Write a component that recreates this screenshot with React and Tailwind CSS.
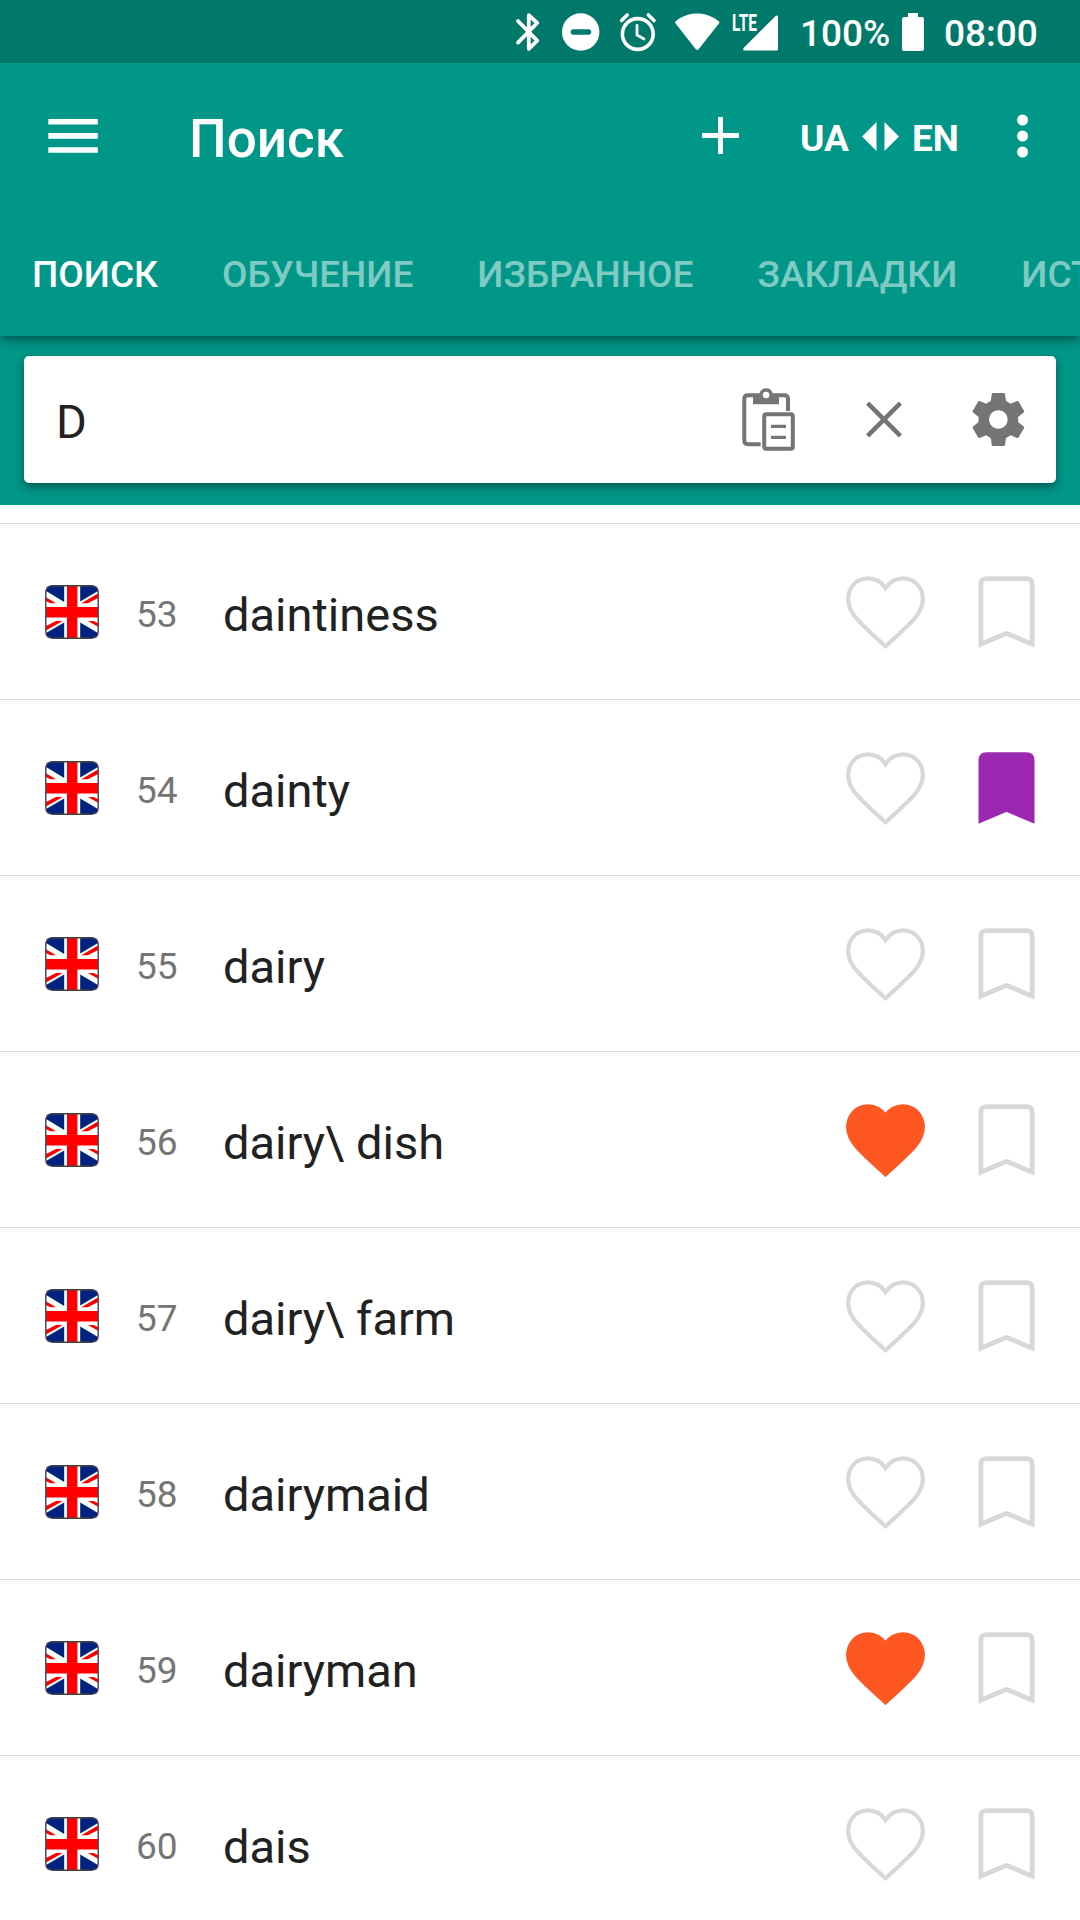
const words = [
  { id: 53, text: "daintiness" },
  { id: 54, text: "dainty", bookmarked: true },
  { id: 55, text: "dairy" },
  { id: 56, text: "dairy\\ dish", liked: true },
  { id: 57, text: "dairy\\ farm" },
  { id: 58, text: "dairymaid" },
  { id: 59, text: "dairyman", liked: true },
  { id: 60, text: "dais" },
];

const tabs = ["ПОИСК", "ОБУЧЕНИЕ", "ИЗБРАННОЕ", "ЗАКЛАДКИ", "ИСТОРИЯ"];

const StatusBar = () => (
  <div className="flex h-[63px] shrink-0 items-center bg-[#00796b] pl-[516px] text-white">
    <svg className="h-[38px] w-[24px]" viewBox="0 0 24 38" fill="none" stroke="currentColor" strokeWidth="3.8" strokeLinecap="round" strokeLinejoin="round">
      <path d="M2 8L21.2 27.6L12.8 35.8V2.2L21.2 10L2 29.6" />
    </svg>
    <svg className="ml-[22px] size-[38px]" viewBox="0 0 38 38">
      <circle cx="18.7" cy="19" r="18.7" fill="currentColor" />
      <rect x="8.7" y="16.3" width="20.5" height="5.4" rx="2.7" fill="#00796b" />
    </svg>
    <svg className="ml-[19px] h-[40px] w-[38px]" viewBox="0 0 38 40" fill="none" stroke="currentColor" strokeWidth="3.6" strokeLinecap="round">
      <circle cx="18.8" cy="22" r="15.4" />
      <path d="M2.6 8.6L8.2 3M29.4 3L35 8.6" />
      <path d="M18 13.5V23L25 27" strokeWidth="2.8" />
    </svg>
    <svg className="ml-[18px] h-[38px] w-[45px]" viewBox="0 0 45 38" fill="currentColor">
      <path d="M0.6 10.6C-.1 9.8 0 8.8.9 8.2C13-2 31-2 43.6 8.2C44.5 8.8 44.6 9.8 43.9 10.6L23.6 36.2C22.8 37.3 21.6 37.3 20.8 36.2Z" />
    </svg>
    <svg className="ml-[12px] h-[38px] w-[47px] overflow-visible" viewBox="0 0 47 38" fill="currentColor">
      <text x="0" y="17.5" fontFamily="Roboto, sans-serif" fontSize="23" fontWeight="700" textLength="25" lengthAdjust="spacingAndGlyphs">LTE</text>
      <path d="M43.4 3.2C44.6 2 46 2.6 46 4.2V36C46 37 45.4 37.6 44.4 37.6H13C11.2 37.6 10.6 36 11.8 34.8Z" />
    </svg>
    <span className="ml-[21px] w-[90px] pt-[3px] text-[37px] font-medium leading-none">100%</span>
    <svg className="ml-[12px] h-[38px] w-[22px]" viewBox="0 0 22 38" fill="currentColor">
      <path d="M6 0H16V4H20Q22 4 22 6V36Q22 38 20 38H2Q0 38 0 36V6Q0 4 2 4H6Z" />
    </svg>
    <span className="ml-[20px] pt-[3px] text-[37px] font-medium leading-none">08:00</span>
  </div>
);

const AppBar = () => (
  <div className="relative z-10 h-[273px] shrink-0 bg-[#009688] text-white shadow-[0_5px_10px_-1px_rgba(0,0,0,0.42)]">
    <div className="flex h-[145px] items-center">
      <svg className="ml-[48px] h-[34px] w-[50px]" viewBox="0 0 50 34" fill="currentColor">
        <path d="M0.3 0H49.8V5.6H0.3ZM0.3 14.1H49.8V19.7H0.3ZM0.3 28.2H49.8V33.8H0.3Z" />
      </svg>
      <h1 className="ml-[91px] w-[513px] pt-[8px] text-[53px] font-medium leading-none">Поиск</h1>
      <svg className="size-[37px]" viewBox="0 0 37 37" fill="currentColor">
        <path d="M16 0H21V16H37V21H21V37H16V21H0V16H16Z" />
      </svg>
      <span className="ml-[61px] flex items-center text-[37px] font-bold leading-none">
        <span className="w-[62px] pt-[6px]">UA</span>
        <svg className="mt-[2px] h-[29px] w-[37px]" viewBox="0 0 37 29" fill="currentColor">
          <path d="M14.5 0V29L0 14.5ZM22.5 0V29L37 14.5Z" />
        </svg>
        <span className="ml-[13px] w-[60px] pt-[6px]">EN</span>
      </span>
      <svg className="ml-[45px] mt-px h-[44px] w-[12px]" viewBox="0 0 12 44" fill="currentColor">
        <circle cx="5.6" cy="6" r="5.5" />
        <circle cx="5.6" cy="22" r="5.5" />
        <circle cx="5.6" cy="38" r="5.5" />
      </svg>
    </div>
    <nav className="flex h-[128px] items-center gap-[64px] overflow-hidden pl-[32px] pt-[4px] text-[37px] font-medium leading-none">
      {tabs.map((tab, i) => (
        <span key={tab} className={i === 0 ? "text-white" : "text-white/50"}>
          {tab}
        </span>
      ))}
    </nav>
  </div>
);

const SearchBox = () => (
  <div className="h-[169px] shrink-0 bg-[#009688] px-[24px] pt-[20px]">
    <div className="flex h-[127px] items-center rounded-[5px] bg-white text-[#757575] shadow-[0_4px_10px_rgba(0,0,0,0.4)]">
      <span className="ml-[32px] w-[686px] pt-[4px] text-[47px] leading-none text-[#212121]">D</span>
      <svg className="h-[63px] w-[53px]" viewBox="0 0 53 63" fill="none" stroke="currentColor" strokeWidth="4">
        <path d="M18.7 56.3H6Q2.3 56.3 2.3 52.6V11Q2.3 7.3 6 7.3H12M36 7.3H42.3Q46 7.3 46 11V23" />
        <path d="M11 5.3H17.6A6.7 6.7 0 0 1 30.6 5.3H37V16.3H11ZM27.4 7A3.3 3.3 0 1 0 20.8 7A3.3 3.3 0 1 0 27.4 7Z" fill="currentColor" fillRule="evenodd" stroke="none" />
        <rect x="22.2" y="26.2" width="28.6" height="34.6" rx="2" />
        <path d="M29 38.3H44M29 49.3H44" strokeWidth="3.2" />
      </svg>
      <svg className="ml-[71px] h-[37px] w-[36px]" viewBox="0 0 36 37" fill="none" stroke="currentColor" strokeWidth="4.6">
        <path d="M1.6 2.1L34.4 34.9M34.4 2.1L1.6 34.9" />
      </svg>
      <svg className="ml-[64px] size-[65px]" viewBox="0 0 24.5 24.5" fill="currentColor">
        <path transform="translate(.2 .25)" d="M19.43 12.98c.04-.32.07-.64.07-.98s-.03-.66-.07-.98l2.11-1.65c.19-.15.24-.42.12-.64l-2-3.46c-.12-.22-.39-.3-.61-.22l-2.49 1c-.52-.4-1.08-.73-1.69-.98l-.38-2.65C14.46 2.18 14.25 2 14 2h-4c-.25 0-.46.18-.49.42l-.38 2.65c-.61.25-1.17.59-1.69.98l-2.49-1c-.23-.09-.49 0-.61.22l-2 3.46c-.13.22-.07.49.12.64l2.11 1.65c-.04.32-.07.65-.07.98s.03.66.07.98l-2.11 1.65c-.19.15-.24.42-.12.64l2 3.46c.12.22.39.3.61.22l2.49-1c.52.4 1.08.73 1.69.98l.38 2.65c.03.24.24.42.49.42h4c.25 0 .46-.18.49-.42l.38-2.65c.61-.25 1.17-.59 1.69-.98l2.49 1c.23.09.49 0 .61-.22l2-3.46c.12-.22.07-.49-.12-.64l-2.11-1.65zM12 15.5c-1.93 0-3.5-1.57-3.5-3.5s1.57-3.5 3.5-3.5 3.5 1.57 3.5 3.5-1.57 3.5-3.5 3.5z" />
      </svg>
    </div>
  </div>
);

const Flag = () => (
  <svg className="ml-[45px] mt-px size-[54px]" viewBox="0 0 54 54">
    <rect x="0.8" y="0.8" width="52.4" height="52.4" rx="6.5" fill="#fff" />
    <path d="M5 1H19.2V17L1 6V5Q1 1 5 1ZM35.2 1H49Q52 1 53 4V6L35.2 16.6ZM19.2 53H5Q2 53 1 50V48L19.2 37.6ZM35.2 53H49Q53 53 53 49V48L35.2 37.4Z" fill="#00247d" />
    <path d="M1 12.3L11 18.3H5.5L1 16ZM53 8.5V13L43 18.3H36.3ZM1 45.5V41L11 36H17.7ZM53 41.7L43 36H48.5L53 38Z" fill="#f00" />
    <path d="M22 1H32.4V22H53V32.6H32.4V53H22V32.6H1V22H22Z" fill="#f00" />
    <rect x="0.8" y="0.8" width="52.4" height="52.4" rx="6.5" fill="none" stroke="#444" strokeWidth="1.4" />
  </svg>
);

const WordRow = ({ word }) => (
  <li className="flex h-[176px] shrink-0 items-center border-t border-[#d9d9d9] shadow-[inset_0_2px_0_#fafafa]">
    <Flag />
    <span className="ml-[37px] w-[87px] pt-[6px] text-[37px] leading-none text-[#757575]">{word.id}</span>
    <span className="w-[623px] pt-[6px] text-[47px] leading-none text-[#212121]">{word.text}</span>
    <svg
      className={word.liked ? "mt-[2px] h-[73px] w-[79px] text-[#ff5722]" : "mt-[2px] h-[73px] w-[79px] text-[#d7d9d8]"}
      viewBox="0 0 79 73"
      fill={word.liked ? "currentColor" : "none"}
      stroke="currentColor"
      strokeWidth="4.2"
    >
      <path d="M39.5 12C35.5 6 29.5 2.3 22 2.3C10.5 2.3 2.2 11.5 2.2 23C2.2 37.5 13.5 46.5 39.5 70.3C65.5 46.5 76.8 37.5 76.8 23C76.8 11.5 68.5 2.3 57 2.3C49.5 2.3 43.5 6 39.5 12Z" />
    </svg>
    <svg
      className={word.bookmarked ? "ml-[53px] mt-px h-[72px] w-[57px] text-[#9c27b0]" : "ml-[53px] mt-px h-[72px] w-[57px] text-[#d7d9d8]"}
      viewBox="0 0 57 72"
      fill={word.bookmarked ? "currentColor" : "none"}
      stroke="currentColor"
      strokeWidth="4.8"
    >
      <path d="M2.9 68.1V8.4Q2.9 2.6 8.7 2.6H48.3Q54.1 2.6 54.1 8.4V68.1L28.5 57.4Z" />
    </svg>
  </li>
);

const App = () => {
  return (
    <div className="flex h-[1920px] w-[1080px] flex-col overflow-hidden bg-white font-['Roboto',sans-serif]">
      <StatusBar />
      <AppBar />
      <SearchBox />
      <ul className="flex flex-1 flex-col overflow-hidden pt-[18px]">
        {words.map((word) => (
          <WordRow key={word.id} word={word} />
        ))}
      </ul>
    </div>
  );
};

export default App;
